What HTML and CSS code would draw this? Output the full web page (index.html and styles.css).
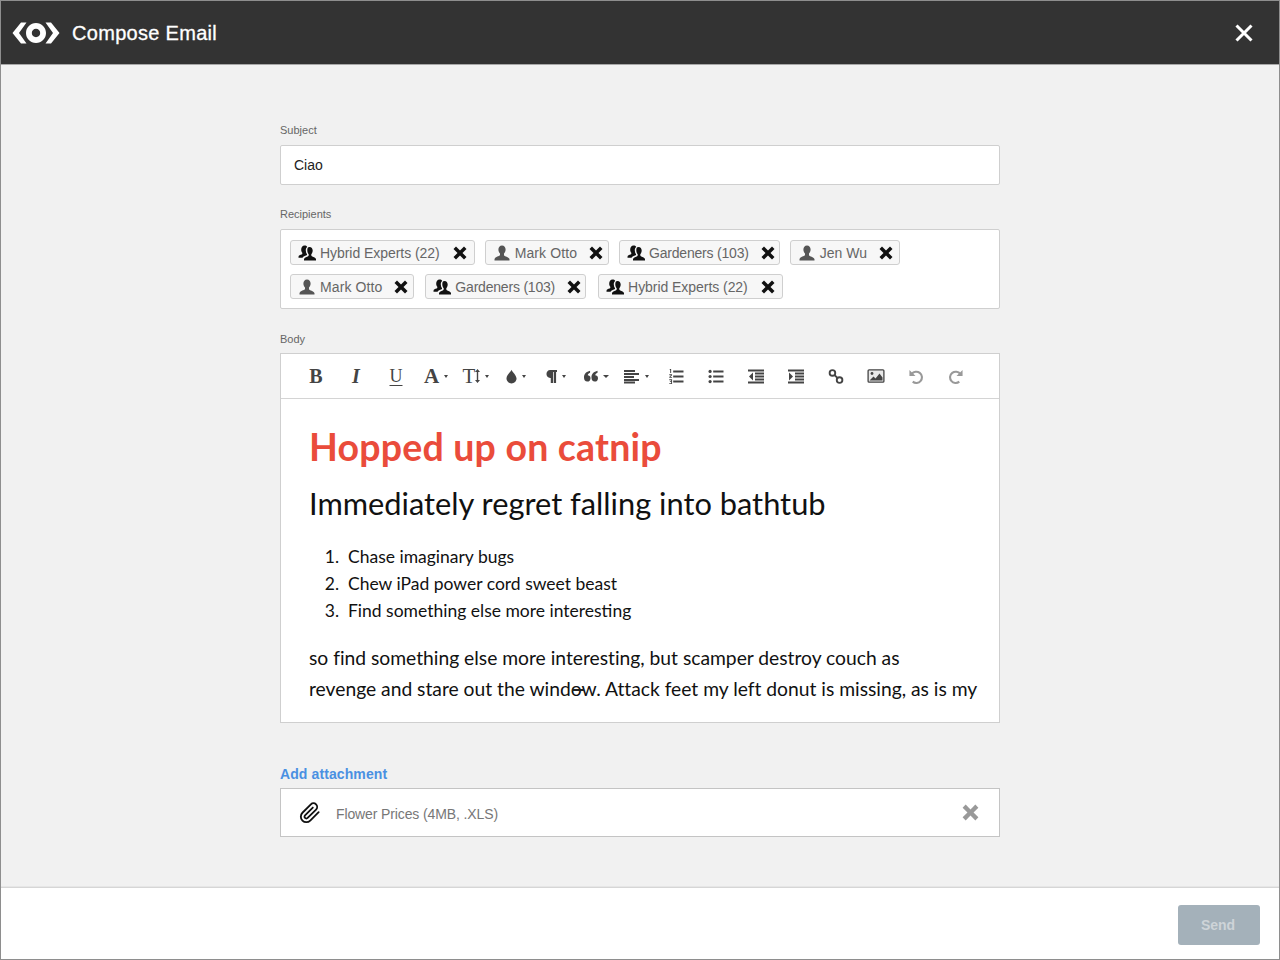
FILE: index.html
```html
<!DOCTYPE html>
<html lang="en">
<head>
<meta charset="utf-8">
<title>Compose Email</title>
<link rel="stylesheet" href="styles.css">
</head>
<body>
<svg class="defs" width="0" height="0" aria-hidden="true">
  <symbol id="person" viewBox="0 0 16 16"><path d="M8 0.500c2.200 0 3.600 1.700 3.600 4 0 1.700-.7 3.200-1.600 4.100v1.300c0 .6.500 1 1.200 1.300 1.900.7 4 1.300 4.300 3.100v1.200H.5v-1.300c.3-1.800 2.400-2.400 4.300-3.100.7-.3 1.200-.7 1.200-1.300V8.600C5.100 7.700 4.400 6.200 4.400 4.500c0-2.300 1.400-4 3.600-4z"/></symbol>
  <symbol id="group" viewBox="0 0 18 16"><path d="M11.500 2c2 0 3.200 1.500 3.200 3.600 0 1.500-.6 2.800-1.400 3.600v1.100c0 .5.400.9 1 1.100 1.500.6 3.400 1.100 3.700 2.700v1.400H6v-1.400c.3-1.600 2.200-2.100 3.700-2.700.6-.2 1-.6 1-1.100V9.200c-.8-.8-1.400-2.100-1.400-3.600C9.300 3.500 9.500 2 11.500 2z"/><path d="M6.500.5C7.800.5 8.700 1 9.200 1.900 8 2.600 7.800 4 7.800 5.600c0 1.400.4 2.700 1.200 3.700v.7c-.9.700-3.900 1.100-4.500 2.800H.5v-1.100c.2-1.200 1.700-1.600 3-2.100.5-.2.8-.5.8-.9V7.800C3.700 7.100 3.200 6 3.200 4.800 3.200 2.200 4.500.5 6.500.5z"/></symbol>
  <symbol id="cross" viewBox="0 0 14 14"><path d="M3 .5 7 4.500 11 .5 13.500 3 9.500 7 13.500 11 11 13.500 7 9.500 3 13.500 .5 11 4.500 7 .5 3z"/></symbol>
</svg>
<div class="window">
  <header class="topbar">
    <div class="brand">
      <svg class="logo" viewBox="0 0 48 24"><path d="M9 1.500h5.500L7 12l7.500 10.500H9L.5 12z"/><path d="M39 1.500h-5.500L41 12l-7.500 10.500H39L47.500 12z"/><path fill-rule="evenodd" d="M24 2c5.600 0 10 4.500 10 10s-4.400 10-10 10-10-4.500-10-10S18.400 2 24 2zm0 5.800c-2.300 0-4.200 1.900-4.200 4.200s1.900 4.200 4.200 4.200 4.200-1.900 4.200-4.200-1.900-4.200-4.200-4.200z"/></svg>
      <h1 class="title">Compose Email</h1>
    </div>
    <button class="close-btn" aria-label="Close"><svg viewBox="0 0 18 18"><path d="M1.500 1.500l15 15M16.500 1.500l-15 15"/></svg></button>
  </header>

  <main class="content">
    <div class="form">
      <label class="label">Subject</label>
      <div class="input">Ciao</div>

      <label class="label label-recipients">Recipients</label>
      <div class="recipients">
        <span class="chip chip-hybrid"><svg class="chip-icon group"><use href="#group"/></svg><span class="chip-name">Hybrid Experts (22)</span><svg class="chip-x"><use href="#cross"/></svg></span>
        <span class="chip chip-mark"><svg class="chip-icon person"><use href="#person"/></svg><span class="chip-name">Mark Otto</span><svg class="chip-x"><use href="#cross"/></svg></span>
        <span class="chip chip-gardeners"><svg class="chip-icon group"><use href="#group"/></svg><span class="chip-name">Gardeners (103)</span><svg class="chip-x"><use href="#cross"/></svg></span>
        <span class="chip chip-jen"><svg class="chip-icon person"><use href="#person"/></svg><span class="chip-name">Jen Wu</span><svg class="chip-x"><use href="#cross"/></svg></span>
        <span class="chip chip-mark"><svg class="chip-icon person"><use href="#person"/></svg><span class="chip-name">Mark Otto</span><svg class="chip-x"><use href="#cross"/></svg></span>
        <span class="chip chip-gardeners chip-after"><svg class="chip-icon group"><use href="#group"/></svg><span class="chip-name">Gardeners (103)</span><svg class="chip-x"><use href="#cross"/></svg></span>
        <span class="chip chip-hybrid chip-after-2"><svg class="chip-icon group"><use href="#group"/></svg><span class="chip-name">Hybrid Experts (22)</span><svg class="chip-x"><use href="#cross"/></svg></span>
      </div>

      <label class="label label-body">Body</label>
      <div class="editor">
        <div class="toolbar">
          <span class="tool serif bold big">B</span>
          <span class="tool serif italic bold-i big">I</span>
          <span class="tool serif underline">U</span>
          <span class="tool serif bold large caret">A</span>
          <span class="tool serif large caret tt">T<svg class="updown" viewBox="0 0 5 14"><path d="M2.500 0 5 3H3.200v8H5l-2.500 3L0 11h1.800V3H0z"/></svg></span>
          <span class="tool caret"><svg class="ic" viewBox="0 0 12 16"><path d="M6 .5c1 2.700 5.500 6 5.500 9.700C11.500 13 9 15.500 6 15.500S.5 13 .5 10.200C.5 6.500 5 3.200 6 .5z"/></svg></span>
          <span class="tool caret"><svg class="ic" viewBox="0 0 12 16"><path d="M4.500 1H12v2.200h-1V15H8.500V3.200h-.8V15H5.200V9.500h-.7C2.200 9.500.5 7.700.5 5.300S2.200 1 4.500 1z"/></svg></span>
          <span class="tool caret caret-wide"><svg class="ic quote" viewBox="0 0 15 12"><path d="M6.500.5C2.500 1.500 0 3.800 0 7.500 0 10 1.300 12 3.500 12S7 10.400 7 8.300 5.500 5.500 4 5.300c.2-1.300 1-2.200 2.500-2.800zM14.500.5C10.500 1.500 8 3.800 8 7.500c0 2.500 1.300 4.500 3.500 4.500S15 10.400 15 8.300s-1.500-2.800-3-3c.2-1.300 1-2.200 2.500-2.800z"/></svg></span>
          <span class="tool caret"><svg class="ic wide" viewBox="0 0 16 14"><path d="M0 .5h11v2H0zM0 3.500h15v2H0zM0 6.500h10v2H0zM0 9.500h15v2H0zM0 12h11v2H0z"/></svg></span>
          <span class="tool"><svg class="ic wide" viewBox="0 0 16 16"><path d="M5 1.500h11v2.200H5zM5 6.900h11v2.200H5zM5 12.300h11v2.200H5zM1.500 0h1.300v4.300H1.800V1.100H1.200zM.8 5.700h3v.9L2 8.400h1.800v.9h-3v-.9l1.900-1.800H.8zM.8 11h3v5h-3v-.9h2v-1.200H1.500v-.8h1.300v-1.200h-2z"/></svg></span>
          <span class="tool"><svg class="ic wide" viewBox="0 0 16 16"><circle cx="1.700" cy="2.600" r="1.700"/><circle cx="1.700" cy="8" r="1.700"/><circle cx="1.700" cy="13.400" r="1.700"/><path d="M5 1.500h11v2.200H5zM5 6.900h11v2.200H5zM5 12.300h11v2.200H5z"/></svg></span>
          <span class="tool"><svg class="ic wide" viewBox="0 0 16 14"><path d="M0 0h16v2H0zM7 3h9v2H7zM7 6h9v2H7zM7 9h9v2H7zM0 12h16v2H0zM5 3v8L1 7z"/></svg></span>
          <span class="tool"><svg class="ic wide" viewBox="0 0 16 14"><path d="M0 0h16v2H0zM7 3h9v2H7zM7 6h9v2H7zM7 9h9v2H7zM0 12h16v2H0zM1 3v8l4-4z"/></svg></span>
          <span class="tool"><svg class="ic wide" viewBox="0 0 16 16"><g fill="none" stroke="currentColor" stroke-width="2"><circle cx="4.200" cy="4.200" r="3"/><circle cx="11.800" cy="11.800" r="3"/><path d="M6.500 6.500l3 3"/></g></svg></span>
          <span class="tool"><svg class="ic image" viewBox="0 0 17 14"><rect x=".6" y=".8" width="15.800" height="12.400" rx="1" fill="#e8e8e8" stroke="currentColor" stroke-width="1.300"/><circle cx="4.500" cy="4.500" r="1.400"/><path d="M2 11.500 6 7.500 8 9.500 12 4.500 15 8.500v3z"/></svg></span>
          <span class="tool light"><svg class="ic wide" viewBox="0 0 16 16"><g fill="none" stroke="currentColor" stroke-width="2.200"><path d="M3.500 5.300A6 6 0 1 1 4.500 13.500"/></g><path d="M1 1v6.500h6.500z"/></svg></span>
          <span class="tool light"><svg class="ic wide" viewBox="0 0 16 16"><g fill="none" stroke="currentColor" stroke-width="2.200"><path d="M12.500 5.300A6 6 0 1 0 11.500 13.500"/></g><path d="M15 1v6.500H8.500z"/></svg></span>
        </div>
        <div class="doc">
          <h2 class="doc-title">Hopped up on catnip</h2>
          <h3 class="doc-sub">Immediately regret falling into bathtub</h3>
          <ol class="doc-list">
            <li>Chase imaginary bugs</li>
            <li>Chew iPad power cord sweet beast</li>
            <li>Find something else more interesting</li>
          </ol>
          <p class="doc-text">so find something else more interesting, but scamper destroy couch as<br>revenge and stare out the window. Attack feet my left donut is missing, as is my</p>
          <span class="text-dash"></span>
        </div>
      </div>

      <a class="add-link">Add attachment</a>
      <div class="attachment">
        <svg class="clip" viewBox="0 0 24 24"><path d="M21.440 11.050l-9.190 9.190a6 6 0 0 1-8.490-8.490l9.190-9.190a4 4 0 0 1 5.660 5.660l-9.200 9.190a2 2 0 0 1-2.830-2.830l8.490-8.480"/></svg>
        <span class="file-name">Flower Prices (4MB, .XLS)</span>
        <svg class="file-x"><use href="#cross"/></svg>
      </div>
    </div>
  </main>

  <footer class="footer">
    <button class="send">Send</button>
  </footer>
</div>
</body>
</html>
```
FILE: styles.css
```css
* { box-sizing: border-box; }
html, body { margin: 0; padding: 0; height: 100%; }
body { font-family: "Liberation Sans", Arial, sans-serif; background: #f1f1f1; }
.defs { position: absolute; }
.window { width: 1280px; height: 960px; display: flex; flex-direction: column; border: 1px solid #8e8e8e; background: #f1f1f1; overflow: hidden; }
.topbar { flex: none; height: 64px; background: #333; border-bottom: 1px solid #a8a8a8; display: flex; align-items: center; justify-content: space-between; padding: 0 25px 0 11px; }
.brand { display: flex; align-items: center; gap: 12px; }
.logo { width: 48px; height: 24px; fill: #fff; }
.title { margin: 0; color: #fff; font-size: 20px; line-height: 24px; font-weight: 400; letter-spacing: .3px; -webkit-text-stroke: .3px #fff; }
.close-btn { width: 20px; height: 20px; padding: 1px; border: 0; background: none; display: block; }
.close-btn svg { display: block; width: 18px; height: 18px; stroke: #fff; stroke-width: 3; fill: none; }
.content { flex: 1; display: flex; justify-content: center; padding-top: 58px; border-bottom: 1px solid #d6d6d6; box-shadow: inset 0 -1px 0 #e6e6e6; }
.form { width: 720px; display: flex; flex-direction: column; }
.label { font-size: 11px; line-height: 14px; color: #666; margin-bottom: 8px; }
.input { height: 40px; background: #fff; border: 1px solid #cfcfcf; border-radius: 2px; padding: 0 13px; font-size: 14px; line-height: 38px; color: #222; }
.label-recipients { margin-top: 22px; }
.recipients { height: 80px; background: #fff; border: 1px solid #cfcfcf; border-radius: 2px; padding: 10px 9px; display: flex; flex-wrap: wrap; align-content: flex-start; gap: 9px 10px; }
.chip { height: 25px; display: inline-flex; align-items: center; padding: 0 5px 0 7px; background: #f7f7f7; border: 1px solid #cfcfcf; border-radius: 3px; font-size: 14px; color: #666; }
.chip-icon { display: block; fill: #333; }
.chip-icon.group { width: 18px; height: 16px; fill: #111; }
.chip-icon.person { width: 16px; height: 16px; fill: #555; margin: 0 1px; }
.chip-name { margin-left: 4px; margin-right: 12px; }
.chip-x { display: block; width: 14px; height: 14px; fill: #111; margin-right: -1px; }
.chip-hybrid { padding-right: 8px; }
.chip-hybrid .chip-name { margin-right: 13px; letter-spacing: -.05px; }
.chip-mark { padding-right: 6px; }
.chip-mark .chip-name { letter-spacing: .1px; }
.chip-gardeners .chip-name { letter-spacing: -.2px; }
.chip-jen { padding-right: 7px; }
.chip-after { margin-left: 1px; }
.chip-after-2 { margin-left: 2px; }
.label-body { margin-top: 23px; margin-bottom: 7px; }
.editor { height: 370px; background: #fff; border: 1px solid #cfcfcf; display: flex; flex-direction: column; overflow: hidden; }
.toolbar { flex: none; height: 45px; border-bottom: 1px solid #d4d4d4; display: flex; align-items: center; padding-left: 15px; color: #444; }
.tool { width: 40px; height: 100%; display: flex; align-items: center; justify-content: center; font-size: 18px; color: #444; fill: #444; }
.tool.light { color: #999; fill: #999; }
.serif { font-family: "Liberation Serif", "Times New Roman", serif; }
.bold { font-weight: 700; }
.big { font-size: 20px; }
.italic { font-style: italic; }
.bold-i { font-weight: 700; }
.underline { text-decoration: underline; text-underline-offset: 3px; font-size: 18px; }
.large { font-size: 21px; }
.caret::after { content: ""; width: 0; height: 0; border: 2.500px solid transparent; border-top: 3px solid #444; border-bottom: 0; margin-left: 5px; }
.caret-wide::after { border-left-width: 3.500px; border-right-width: 3.500px; border-top-width: 3.500px; }
.updown { width: 5px; height: 14px; margin-left: 0; }
.ic { display: block; width: 11px; height: 15px; flex: none; }
.ic.wide { width: 16px; height: 15px; }
.ic.quote { width: 14px; height: 12px; }
.ic.image { width: 18px; height: 14px; }
.doc { flex: 1; position: relative; padding: 23px 20px 0 28px; font-family: Lato, sans-serif; color: #111; overflow: hidden; }
.doc-title { margin: 0; font-size: 37.500px; line-height: 50px; font-weight: 700; letter-spacing: .2px; color: #ea4c3b; }
.doc-sub { margin: 11px 0 0; font-size: 30.800px; line-height: 42px; font-weight: 400; color: #111; }
.doc-list { margin: 18px 0 0; padding: 0 0 0 39px; font-size: 17.500px; line-height: 27px; }
.doc-list li::marker { content: counter(list-item) ".\00a0\00a0"; }
.doc-text { margin: 18px 0 0; font-size: 19.300px; line-height: 31px; letter-spacing: -.015px; white-space: nowrap; }
.text-dash { position: absolute; left: 291px; top: 290px; width: 12px; height: 2px; background: #222; }
.add-link { margin-top: 43px; font-size: 14px; line-height: 16px; font-weight: 700; letter-spacing: .1px; color: #4a90e2; }
.attachment { height: 49px; margin-top: 6px; background: #fff; border: 1px solid #c4c4c4; display: flex; align-items: center; padding: 0 20px 0 18px; }
.clip { width: 22px; height: 22px; fill: none; stroke: #111; stroke-width: 2; stroke-linecap: round; stroke-linejoin: round; }
.file-name { flex: 1; margin-left: 15px; padding-top: 2px; font-size: 14px; letter-spacing: -.12px; color: #777; }
.file-x { width: 17px; height: 17px; fill: #999; }
.footer { flex: none; height: 71px; background: #fff; display: flex; justify-content: flex-end; align-items: flex-start; padding: 17px 19px 0 0; }
.send { width: 82px; height: 40px; padding: 0 2px 0 0; border: 0; border-radius: 3px; background: #a4b1ba; color: #ced4d8; font: 700 14px "Liberation Sans", Arial, sans-serif; }
```
